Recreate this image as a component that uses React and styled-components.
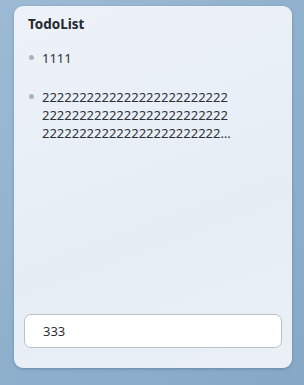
import styled, { createGlobalStyle } from "styled-components";

const GlobalStyle = createGlobalStyle`
  html, body {
    margin: 0;
    padding: 0;
    height: 100%;
  }
  body {
    font-family: "Noto Sans", "Open Sans", sans-serif;
    background: linear-gradient(135deg, #9dbad4 0%, #8fb0cd 50%, #87a9c8 100%);
  }
  #root {
    height: 100%;
  }
`;

const Page = styled.div`
  box-sizing: border-box;
  height: 385px;
  padding: 6px 12px 17px 14px;
  display: flex;
`;

const Card = styled.div`
  flex: 1;
  display: flex;
  flex-direction: column;
  box-sizing: border-box;
  padding: 9px 10px 20px;
  border-radius: 9px;
  background: linear-gradient(160deg, #edf2f8 0%, #e6edf5 60%, #eaf0f6 100%);
  box-shadow: 0 1px 3px rgba(40, 70, 100, 0.35);
`;

const Title = styled.h1`
  margin: 0 0 16px;
  padding-left: 4px;
  font-size: 13.5px;
  font-weight: 700;
  line-height: 18px;
  color: #26292d;
`;

const List = styled.ul`
  flex: 1;
  margin: 0;
  padding: 0 0 0 5px;
  list-style: none;
  display: flex;
  flex-direction: column;
  gap: 21px;
`;

const Item = styled.li`
  display: flex;
  align-items: flex-start;
  gap: 8px;
`;

const Dot = styled.span`
  flex: none;
  width: 5px;
  height: 5px;
  margin-top: 6px;
  border-radius: 50%;
  background: #aab2ba;
`;

const Text = styled.span`
  width: 192px;
  font-size: 13px;
  line-height: 18px;
  color: #2d3136;
  word-break: break-all;
  display: -webkit-box;
  -webkit-line-clamp: 3;
  -webkit-box-orient: vertical;
  overflow: hidden;
`;

const Input = styled.input`
  box-sizing: border-box;
  width: 100%;
  height: 34px;
  padding: 0 0 0 18px;
  border: 1px solid #b9c1c9;
  border-radius: 7px;
  background: #ffffff;
  font-family: inherit;
  font-size: 13px;
  color: #2d3136;
  outline: none;
`;

const todos = ["1111", "2".repeat(90)];

const App = () => {
  return (
    <>
      <GlobalStyle />
      <Page>
        <Card>
          <Title>TodoList</Title>
          <List>
            {todos.map((t, i) => (
              <Item key={i}>
                <Dot />
                <Text>{t}</Text>
              </Item>
            ))}
          </List>
          <Input defaultValue="333" />
        </Card>
      </Page>
    </>
  );
};

export default App;
